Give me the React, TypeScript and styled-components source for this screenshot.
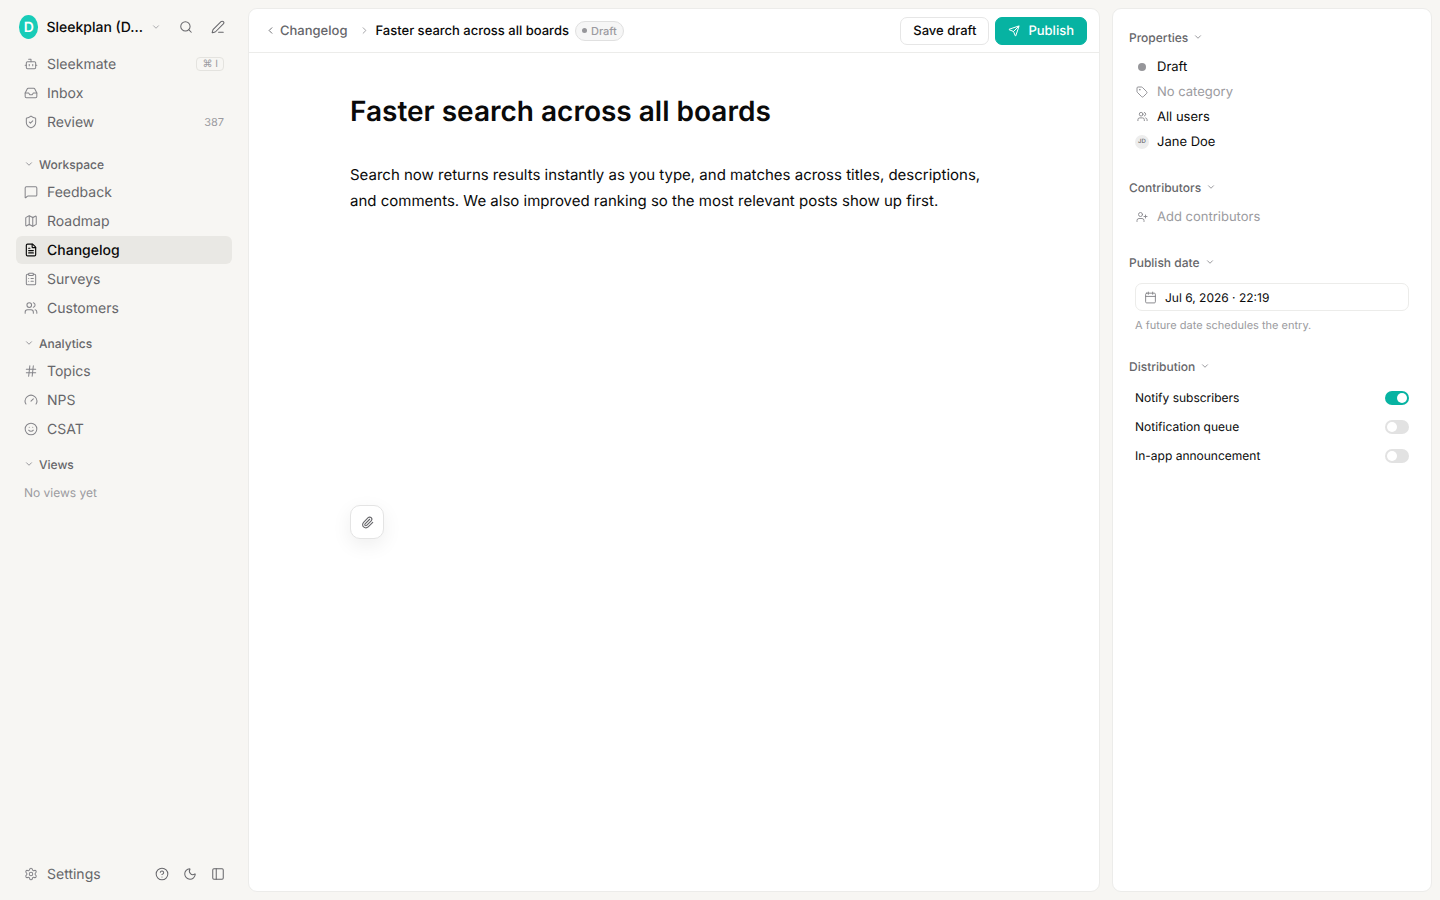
import React from "react";
import styled, { createGlobalStyle, css } from "styled-components";
import {
  Bot,
  Calendar,
  ChevronDown,
  ChevronLeft,
  ChevronRight,
  CircleHelp,
  ClipboardList,
  FileText,
  Gauge,
  Hash,
  Inbox,
  Map as MapIcon,
  MessageSquare,
  Moon,
  PanelLeft,
  Paperclip,
  PenLine,
  Search,
  Send,
  Settings,
  ShieldCheck,
  Smile,
  Tag,
  UserPlus,
  Users,
  type LucideIcon,
} from "lucide-react";

const color = {
  page: "#f7f6f3",
  card: "#ffffff",
  line: "#ececea",
  text: "#0a0a0a",
  nav: "#66666a",
  icon: "#85858a",
  faint: "#9b9ba0",
  active: "#e9e8e4",
  teal: "#07b3a2",
};

const GlobalStyle = createGlobalStyle`
  *, *::before, *::after { box-sizing: border-box; }
  body {
    margin: 0;
    background: ${color.page};
    color: ${color.text};
    font-family: Inter, "Liberation Sans", sans-serif;
    font-size: 13px;
    text-rendering: geometricPrecision;
    -webkit-font-smoothing: antialiased;
  }
  button, input, textarea { font: inherit; color: inherit; text-rendering: inherit; }
  button { background: none; border: 0; padding: 0; cursor: pointer; }
  svg { flex: none; display: block; }
`;

const Shell = styled.div`
  display: flex;
  min-height: 100vh;
`;

/* ---------- sidebar ---------- */

const Sidebar = styled.aside`
  flex: none;
  width: 248px;
  padding: 12px 16px;
  display: flex;
  flex-direction: column;
`;

const WorkspaceBar = styled.div`
  display: flex;
  align-items: center;
  height: 30px;
  padding: 0 0 0 3px;
  margin-bottom: 8px;
`;

const WorkspaceButton = styled.button`
  display: flex;
  align-items: center;
  gap: 8px;
  width: 142px;
  font-size: 14px;
  font-weight: 500;
  white-space: nowrap;
  svg { margin-left: auto; color: ${color.faint}; }
`;

const Logo = styled.span`
  width: 24px;
  height: 24px;
  border-radius: 50%;
  background: #18ccb8;
  color: #fff;
  font-weight: 600;
  display: grid;
  place-items: center;
`;

const IconButton = styled.button`
  width: 28px;
  height: 28px;
  display: grid;
  place-items: center;
  color: ${color.nav};
`;

const BarActions = styled.div`
  display: flex;
  gap: 4px;
  margin-left: auto;
`;

const NavList = styled.ul`
  list-style: none;
  margin: 0;
  padding: 0;
  display: flex;
  flex-direction: column;
  gap: 1px;
`;

const navRow = css`
  display: flex;
  align-items: center;
  gap: 9px;
  height: 28px;
  padding: 0 8px;
  border-radius: 6px;
  font-size: 14px;
  text-decoration: none;
`;

const NavLink = styled.a<{ $active?: boolean }>`
  ${navRow}
  color: ${(p) => (p.$active ? color.text : color.nav)};
  background: ${(p) => (p.$active ? color.active : "transparent")};
  font-weight: ${(p) => (p.$active ? 500 : 400)};
  svg { color: ${(p) => (p.$active ? color.text : color.icon)}; }
`;

const Count = styled.span`
  margin-left: auto;
  font-size: 11px;
  color: ${color.faint};
`;

const Shortcut = styled.kbd`
  margin-left: auto;
  height: 14px;
  padding: 0 5px;
  border: 1px solid #e4e3df;
  border-radius: 4px;
  font-family: inherit;
  font-size: 10px;
  line-height: 12px;
  color: ${color.faint};
`;

const NavHeading = styled.button<{ $first?: boolean }>`
  display: flex;
  align-items: center;
  gap: 5px;
  height: 28px;
  margin-top: ${(p) => (p.$first ? 14 : 7)}px;
  padding: 0 8px;
  font-size: 12px;
  font-weight: 500;
  color: ${color.nav};
  svg { color: ${color.icon}; }
`;

const EmptyNote = styled.p`
  margin: 0;
  padding: 0 8px;
  font-size: 12px;
  line-height: 30px;
  color: ${color.faint};
`;

const SidebarFooter = styled.div`
  display: flex;
  align-items: center;
  margin-top: auto;
`;

const FooterActions = styled.div`
  display: flex;
  margin-left: auto;
`;

/* ---------- editor ---------- */

const card = css`
  margin: 8px 0;
  background: ${color.card};
  border: 1px solid ${color.line};
  border-radius: 9px;
`;

const Editor = styled.main`
  ${card}
  flex: 1;
  min-width: 0;
`;

const TopBar = styled.header`
  display: flex;
  align-items: center;
  justify-content: space-between;
  height: 44px;
  padding: 0 12px 0 16px;
  border-bottom: 1px solid ${color.line};
`;

const Crumbs = styled.nav`
  display: flex;
  align-items: center;
  font-weight: 500;
`;

const BackLink = styled.a`
  display: flex;
  align-items: center;
  gap: 4px;
  margin-right: 12px;
  color: ${color.nav};
  text-decoration: none;
`;

const Current = styled.span`
  margin: 0 6px 0 5px;
`;

const Separator = styled.span`
  color: ${color.faint};
`;

const StatusPill = styled.span`
  display: flex;
  align-items: center;
  gap: 4px;
  height: 20px;
  padding: 0 6px;
  border: 1px solid #e0e0e0;
  border-radius: 10px;
  background: #f6f6f6;
  font-size: 11px;
  color: ${color.faint};
`;

const Dot = styled.span<{ $size: number }>`
  width: ${(p) => p.$size}px;
  height: ${(p) => p.$size}px;
  border-radius: 50%;
  background: #96969a;
`;

const Actions = styled.div`
  display: flex;
  gap: 6px;
`;

const Button = styled.button<{ $primary?: boolean }>`
  display: flex;
  align-items: center;
  gap: 8px;
  height: 28px;
  padding: 0 12px;
  border: 1px solid ${(p) => (p.$primary ? color.teal : "#e6e6e6")};
  border-radius: 7px;
  background: ${(p) => (p.$primary ? color.teal : color.card)};
  color: ${(p) => (p.$primary ? "#fff" : color.text)};
  font-weight: 500;
`;

const Entry = styled.div`
  max-width: 648px;
  margin: 0 auto;
  padding-top: 40px;
`;

const TitleInput = styled.input`
  display: block;
  width: 100%;
  height: 36px;
  padding: 0;
  border: 0;
  outline: 0;
  background: none;
  font-size: 28px;
  font-weight: 600;
`;

const BodyInput = styled.textarea`
  display: block;
  width: 100%;
  height: 319px;
  margin: 33px 0 24px;
  padding: 0;
  border: 0;
  outline: 0;
  resize: none;
  background: none;
  font-size: 15px;
  line-height: 26px;
`;

const AttachButton = styled.button`
  width: 34px;
  height: 34px;
  display: grid;
  place-items: center;
  border: 1px solid #e4e4e4;
  border-radius: 10px;
  background: ${color.card};
  color: ${color.nav};
  box-shadow: 0 6px 20px rgba(0, 0, 0, 0.07);
`;

/* ---------- properties panel ---------- */

const Panel = styled.aside`
  ${card}
  flex: none;
  width: 320px;
  margin-left: 12px;
  margin-right: 8px;
  padding: 14px 22px 14px 16px;
  display: flex;
  flex-direction: column;
  gap: 19px;
`;

const Group = styled.section`
  display: flex;
  flex-direction: column;
`;

const GroupHeading = styled.button`
  display: flex;
  align-items: center;
  gap: 5px;
  height: 28px;
  margin-bottom: 3px;
  font-size: 12px;
  font-weight: 500;
  color: ${color.nav};
  svg { color: ${color.icon}; }
`;

const GroupBody = styled.div`
  display: flex;
  flex-direction: column;
  padding-left: 6px;
`;

const Property = styled.button<{ $muted?: boolean }>`
  display: flex;
  align-items: center;
  gap: 8px;
  height: 25px;
  color: ${(p) => (p.$muted ? color.faint : color.text)};
`;

const Slot = styled.span`
  width: 14px;
  height: 14px;
  display: grid;
  place-items: center;
  color: ${color.icon};
`;

const Avatar = styled.span`
  width: 14px;
  height: 14px;
  border-radius: 50%;
  background: #ededed;
  display: grid;
  place-items: center;
  font-size: 6px;
  font-weight: 500;
  color: ${color.nav};
`;

const DateField = styled.button`
  display: flex;
  align-items: center;
  gap: 8px;
  height: 28px;
  margin-top: 4px;
  padding: 0 8px;
  border: 1px solid ${color.line};
  border-radius: 7px;
  font-size: 12px;
  svg { color: ${color.icon}; }
`;

const Hint = styled.p`
  margin: 6px 0 0;
  font-size: 11px;
  line-height: 16px;
  color: ${color.faint};
`;

const SwitchRow = styled.label`
  display: flex;
  align-items: center;
  justify-content: space-between;
  height: 29px;
  font-size: 12px;
`;

const Switch = styled.input`
  appearance: none;
  margin: 0;
  width: 24px;
  height: 14px;
  padding: 2px;
  border-radius: 7px;
  background: #e2e2e2;
  display: flex;
  cursor: pointer;
  &::before {
    content: "";
    width: 10px;
    height: 10px;
    border-radius: 50%;
    background: #fff;
  }
  &:checked { background: ${color.teal}; justify-content: flex-end; }
`;

type Item = { label: string; icon: LucideIcon; active?: boolean; extra?: React.ReactNode };

const mainItems: Item[] = [
  { label: "Sleekmate", icon: Bot, extra: <Shortcut>⌘ I</Shortcut> },
  { label: "Inbox", icon: Inbox },
  { label: "Review", icon: ShieldCheck, extra: <Count>387</Count> },
];
const workspaceItems: Item[] = [
  { label: "Feedback", icon: MessageSquare },
  { label: "Roadmap", icon: MapIcon },
  { label: "Changelog", icon: FileText, active: true },
  { label: "Surveys", icon: ClipboardList },
  { label: "Customers", icon: Users },
];
const analyticsItems: Item[] = [
  { label: "Topics", icon: Hash },
  { label: "NPS", icon: Gauge },
  { label: "CSAT", icon: Smile },
];

const Nav = ({ items }: { items: Item[] }) => (
  <NavList>
    {items.map(({ label, icon: Icon, active, extra }) => (
      <li key={label}>
        <NavLink href="#" $active={active} aria-current={active ? "page" : undefined}>
          <Icon size={14} strokeWidth={active ? 2 : 1.75} />
          {label}
          {extra}
        </NavLink>
      </li>
    ))}
  </NavList>
);

const Section = ({ title, children }: { title: string; children: React.ReactNode }) => (
  <Group>
    <GroupHeading>
      {title}
      <ChevronDown size={10} />
    </GroupHeading>
    <GroupBody>{children}</GroupBody>
  </Group>
);

export default function App() {
  return (
    <>
      <GlobalStyle />
      <Shell>
        <Sidebar>
          <WorkspaceBar>
            <WorkspaceButton>
              <Logo>D</Logo>
              Sleekplan (D...
              <ChevronDown size={10} />
            </WorkspaceButton>
            <BarActions>
              <IconButton aria-label="Search"><Search size={14} strokeWidth={1.75} /></IconButton>
              <IconButton aria-label="New entry"><PenLine size={14} strokeWidth={1.75} /></IconButton>
            </BarActions>
          </WorkspaceBar>
          <Nav items={mainItems} />
          <NavHeading $first><ChevronDown size={10} />Workspace</NavHeading>
          <Nav items={workspaceItems} />
          <NavHeading><ChevronDown size={10} />Analytics</NavHeading>
          <Nav items={analyticsItems} />
          <NavHeading><ChevronDown size={10} />Views</NavHeading>
          <EmptyNote>No views yet</EmptyNote>
          <SidebarFooter>
            <NavLink href="#"><Settings size={14} strokeWidth={1.75} />Settings</NavLink>
            <FooterActions>
              <IconButton aria-label="Help"><CircleHelp size={14} strokeWidth={1.75} /></IconButton>
              <IconButton aria-label="Dark mode"><Moon size={14} strokeWidth={1.75} /></IconButton>
              <IconButton aria-label="Collapse sidebar"><PanelLeft size={14} strokeWidth={1.75} /></IconButton>
            </FooterActions>
          </SidebarFooter>
        </Sidebar>

        <Editor>
          <TopBar>
            <Crumbs aria-label="Breadcrumb">
              <BackLink href="#"><ChevronLeft size={11} />Changelog</BackLink>
              <Separator><ChevronRight size={11} /></Separator>
              <Current>Faster search across all boards</Current>
              <StatusPill><Dot $size={5} />Draft</StatusPill>
            </Crumbs>
            <Actions>
              <Button>Save draft</Button>
              <Button $primary><Send size={12} />Publish</Button>
            </Actions>
          </TopBar>
          <Entry>
            <TitleInput aria-label="Title" defaultValue="Faster search across all boards" />
            <BodyInput
              aria-label="Content"
              spellCheck={false}
              defaultValue="Search now returns results instantly as you type, and matches across titles, descriptions, and comments. We also improved ranking so the most relevant posts show up first."
            />
            <AttachButton aria-label="Attach a file"><Paperclip size={13} /></AttachButton>
          </Entry>
        </Editor>

        <Panel>
          <Section title="Properties">
            <Property><Slot><Dot $size={8} /></Slot>Draft</Property>
            <Property $muted><Slot><Tag size={12} strokeWidth={1.75} /></Slot>No category</Property>
            <Property><Slot><Users size={11} /></Slot>All users</Property>
            <Property><Avatar>JD</Avatar>Jane Doe</Property>
          </Section>
          <Section title="Contributors">
            <Property $muted><Slot><UserPlus size={12} strokeWidth={1.75} /></Slot>Add contributors</Property>
          </Section>
          <Section title="Publish date">
            <DateField><Calendar size={13} strokeWidth={1.75} />Jul 6, 2026 · 22:19</DateField>
            <Hint>A future date schedules the entry.</Hint>
          </Section>
          <Section title="Distribution">
            <SwitchRow>Notify subscribers<Switch type="checkbox" role="switch" defaultChecked /></SwitchRow>
            <SwitchRow>Notification queue<Switch type="checkbox" role="switch" /></SwitchRow>
            <SwitchRow>In-app announcement<Switch type="checkbox" role="switch" /></SwitchRow>
          </Section>
        </Panel>
      </Shell>
    </>
  );
}
